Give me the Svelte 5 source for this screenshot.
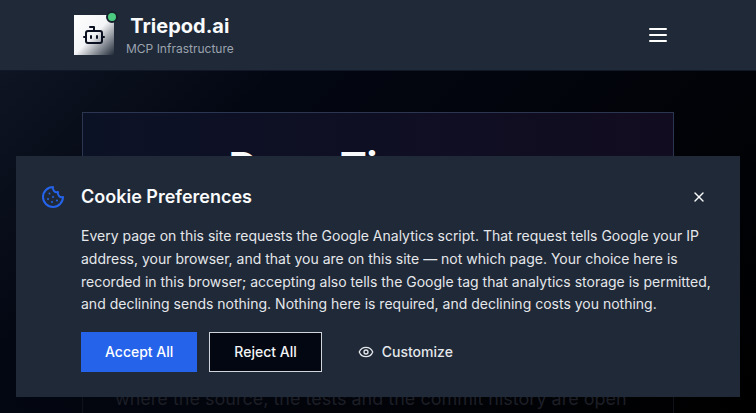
<script lang="ts">
	let showBanner = $state(true);
</script>

<svelte:head>
	<title>Triepod.ai - MCP Infrastructure</title>
</svelte:head>

<div class="page">
	<header class="site-header">
		<div class="brand">
			<div class="logo">
				<svg width="24" height="24" viewBox="0 0 24 24" fill="none" stroke="currentColor" stroke-width="2" stroke-linecap="round" stroke-linejoin="round">
					<path d="M12 8V4H8" />
					<rect x="4" y="8" width="16" height="12" rx="2" />
					<path d="M2 14h2" />
					<path d="M20 14h2" />
					<path d="M15 13v2" />
					<path d="M9 13v2" />
				</svg>
				<span class="status-dot"></span>
			</div>
			<div class="brand-text">
				<div class="brand-name">Triepod.ai</div>
				<div class="brand-sub">MCP Infrastructure</div>
			</div>
		</div>
		<button class="menu-btn" aria-label="Open menu">
			<svg width="24" height="24" viewBox="0 0 24 24" fill="none" stroke="currentColor" stroke-width="2" stroke-linecap="round" stroke-linejoin="round">
				<path d="M4 6h16" />
				<path d="M4 12h16" />
				<path d="M4 18h16" />
			</svg>
		</button>
	</header>

	<main class="content">
		<section class="hero">
			<h1>Deep Tiers now</h1>
		</section>
		<section class="intro">
			<p>where the source, the tests and the commit history are open</p>
		</section>
	</main>
</div>

{#if showBanner}
	<div class="cookie-banner">
		<div class="cookie-head">
			<svg class="cookie-icon" width="24" height="24" viewBox="0 0 24 24" fill="none" stroke="currentColor" stroke-width="2" stroke-linecap="round" stroke-linejoin="round">
				<path d="M12 2a10 10 0 1 0 10 10 4 4 0 0 1-5-5 4 4 0 0 1-5-5" />
				<path d="M8.5 8.5v.01" />
				<path d="M16 15.5v.01" />
				<path d="M12 12v.01" />
				<path d="M11 17v.01" />
				<path d="M7 14v.01" />
			</svg>
			<h2>Cookie Preferences</h2>
			<button class="close-btn" aria-label="Close" onclick={() => (showBanner = false)}>
				<svg width="16" height="16" viewBox="0 0 24 24" fill="none" stroke="currentColor" stroke-width="2" stroke-linecap="round" stroke-linejoin="round">
					<path d="M18 6 6 18" />
					<path d="m6 6 12 12" />
				</svg>
			</button>
		</div>
		<div class="cookie-body">
			<p>
				Every page on this site requests the Google Analytics script. That request tells Google your IP
				address, your browser, and that you are on this site — not which page. Your choice here is
				recorded in this browser; accepting also tells the Google tag that analytics storage is permitted,
				and declining sends nothing. Nothing here is required, and declining costs you nothing.
			</p>
			<div class="cookie-actions">
				<button class="btn accept" onclick={() => (showBanner = false)}>Accept All</button>
				<button class="btn reject" onclick={() => (showBanner = false)}>Reject All</button>
				<button class="btn customize">
					<svg width="16" height="16" viewBox="0 0 24 24" fill="none" stroke="currentColor" stroke-width="2" stroke-linecap="round" stroke-linejoin="round">
						<path d="M2.062 12.348a1 1 0 0 1 0-.696 10.75 10.75 0 0 1 19.876 0 1 1 0 0 1 0 .696 10.75 10.75 0 0 1-19.876 0" />
						<circle cx="12" cy="12" r="3" />
					</svg>
					Customize
				</button>
			</div>
		</div>
	</div>
{/if}

<style>
	:global(body) {
		margin: 0;
		font-family: Inter, 'Noto Sans', sans-serif;
		background: #000;
		color: #f9fafb;
		overflow: hidden;
	}

	.page {
		height: 100vh;
		overflow: hidden;
		background: linear-gradient(135deg, #111827 0%, #030712 30%, #000 100%);
	}

	.site-header {
		display: flex;
		align-items: center;
		justify-content: space-between;
		height: 70px;
		padding: 0 74px;
		background: #1f2937;
		border-bottom: 1px solid #111827;
	}

	.brand {
		display: flex;
		align-items: center;
		gap: 12px;
	}

	.logo {
		position: relative;
		display: flex;
		align-items: center;
		justify-content: center;
		width: 40px;
		height: 40px;
		color: #0b1120;
		background: linear-gradient(135deg, #ffffff 0%, #f3f4f6 50%, #1f2937 100%);
	}

	.status-dot {
		position: absolute;
		top: -4px;
		right: -4px;
		box-sizing: border-box;
		width: 12px;
		height: 12px;
		border: 2px solid #16202c;
		border-radius: 50%;
		background: #4ccb80;
	}

	.brand-text {
		padding-bottom: 2px;
		text-align: center;
	}

	.brand-name {
		font-size: 20px;
		line-height: 28px;
		font-weight: 700;
		color: #f9fafb;
	}

	.brand-sub {
		margin-top: 1px;
		font-size: 12px;
		line-height: 16px;
		color: #9ca3af;
	}

	.menu-btn {
		display: flex;
		padding: 12px;
		border: none;
		background: none;
		color: #fff;
	}

	.content {
		padding: 41px 82px 0;
	}

	.hero {
		margin-bottom: 129px;
		padding: 32px;
		border: 1px solid #2d3650;
		background: linear-gradient(90deg, #0c1226 0%, #120c20 100%);
	}

	.hero h1 {
		margin: 0;
		padding-left: 5px;
		font-size: 40px;
		line-height: 44px;
		font-weight: 700;
		text-align: center;
		color: #f9fafb;
	}

	.intro {
		padding: 32px;
		border: 1px solid #0f1218;
	}

	.intro p {
		margin: 0;
		font-size: 18px;
		line-height: 29px;
		color: #1c1e26;
	}

	.cookie-banner {
		position: fixed;
		left: 16px;
		right: 16px;
		bottom: 16px;
		padding: 24px;
		border: 1px solid #1f2937;
		background: #1f2937;
	}

	.cookie-head {
		display: flex;
		align-items: center;
		gap: 16px;
		margin-bottom: 12px;
	}

	.cookie-icon {
		flex-shrink: 0;
		color: #2563eb;
	}

	.cookie-head h2 {
		flex: 1;
		margin: 0;
		font-size: 18px;
		line-height: 28px;
		font-weight: 600;
		color: #f9fafb;
	}

	.close-btn {
		display: flex;
		padding: 8px;
		border: none;
		background: none;
		color: #f9fafb;
	}

	.cookie-body {
		padding-left: 40px;
	}

	.cookie-body p {
		margin: 0 0 16px;
		font-size: 14px;
		line-height: 22.75px;
		color: #e5e7eb;
	}

	.cookie-actions {
		display: flex;
		gap: 12px;
	}

	.btn {
		display: flex;
		align-items: center;
		gap: 8px;
		box-sizing: border-box;
		height: 40px;
		padding: 0 24px;
		border: none;
		font-family: inherit;
		font-size: 14px;
		line-height: 20px;
		font-weight: 500;
		cursor: pointer;
	}

	.accept {
		background: #2563eb;
		color: #fff;
	}

	.reject {
		background: #030712;
		border: 1px solid #d1d5db;
		color: #f3f4f6;
	}

	.customize {
		background: none;
		color: #e5e7eb;
	}
</style>
